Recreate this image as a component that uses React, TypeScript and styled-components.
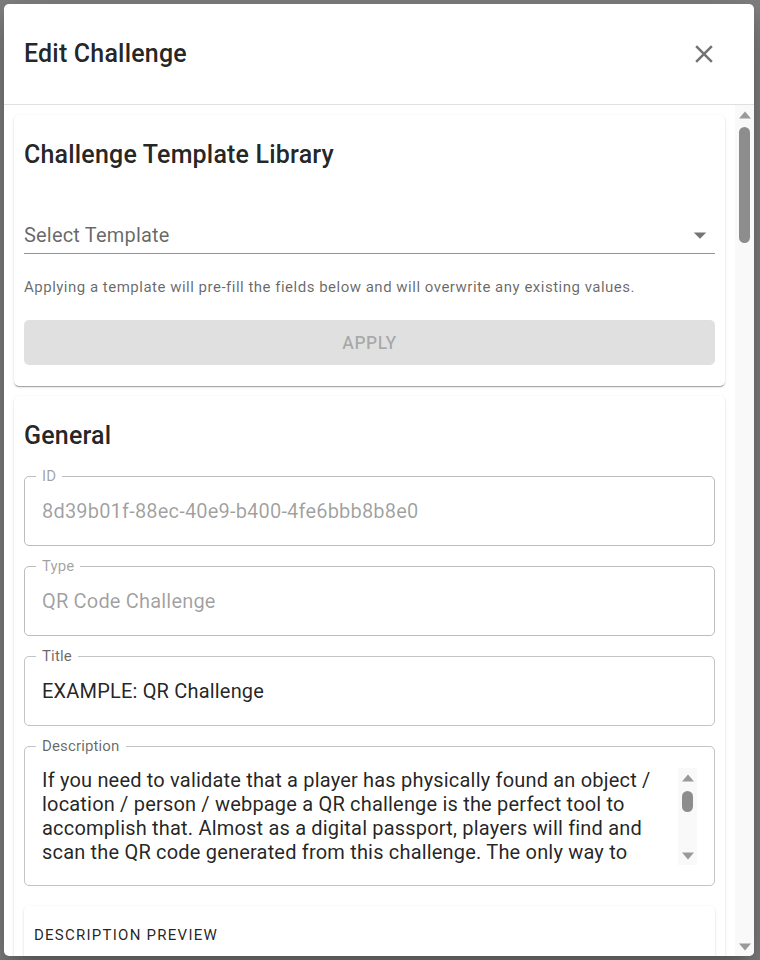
import * as React from 'react'
import styled, { createGlobalStyle } from 'styled-components'

type FieldInfo = {
  label: string
  value: string
  disabled?: boolean
}

const DESCRIPTION =
  'If you need to validate that a player has physically found an object / location / person / webpage a QR challenge is the perfect tool to accomplish that. Almost as a digital passport, players will find and scan the QR code generated from this challenge. The only way to complete this challenge is to scan the code with the camera of a mobile device, so make sure to print it out or put it somewhere your players can reach it. Once the code has been scanned the player is awarded the points for this challenge and will be shown the completion message. You can place several QR challenges around a venue to build a scavenger hunt.'

const GENERAL: FieldInfo[] = [
  { label: 'ID', value: '8d39b01f-88ec-40e9-b400-4fe6bbb8b8e0', disabled: true },
  { label: 'Type', value: 'QR Code Challenge', disabled: true },
  { label: 'Title', value: 'EXAMPLE: QR Challenge' },
]

const GlobalStyle = createGlobalStyle`
  html, body {
    margin: 0;
    padding: 0;
  }
  body {
    font-family: Roboto, "Noto Sans", "Liberation Sans", sans-serif;
    background: #808080;
    color: rgba(0, 0, 0, 0.87);
  }
  * {
    box-sizing: border-box;
  }
`

const Screen = styled.div`
  height: 960px;
  padding: 4px;
`

const Dialog = styled.div`
  width: 750px;
  height: 952px;
  display: flex;
  flex-direction: column;
  background: #fff;
  border-radius: 5px;
  overflow: hidden;
  box-shadow: 0px 11px 15px -7px rgba(0, 0, 0, 0.2),
    0px 24px 38px 3px rgba(0, 0, 0, 0.14), 0px 9px 46px 8px rgba(0, 0, 0, 0.12);
`

const Header = styled.div`
  flex-shrink: 0;
  height: 101px;
  display: flex;
  align-items: center;
  justify-content: space-between;
  padding: 0 35px 0 20px;
  border-bottom: 1px solid #e0e0e0;
`

const DialogTitle = styled.h2`
  margin: 0;
  font-size: 25px;
  font-weight: 500;
  line-height: 40px;
  letter-spacing: 0.0075em;
`

const CloseButton = styled.button`
  width: 30px;
  height: 30px;
  padding: 0;
  border: 0;
  background: transparent;
  color: rgba(0, 0, 0, 0.54);
  cursor: pointer;

  & > svg {
    display: block;
  }
`

const Body = styled.div`
  flex: 1;
  min-height: 0;
  display: flex;
`

const Content = styled.div`
  flex: 1;
  min-width: 0;
  overflow: hidden;
  padding: 10px;
  display: flex;
  flex-direction: column;
  gap: 10px;
`

/* scrollbar drawing: rail with arrow buttons and a thumb */
const Rail = styled.div`
  flex-shrink: 0;
  width: 19px;
  display: flex;
  flex-direction: column;
  background: #f9f9f9;
`

const RailButton = styled.div`
  flex-shrink: 0;
  height: 19px;
  display: flex;
  align-items: center;
  justify-content: center;
  color: #9a9a9a;

  & > svg {
    display: block;
  }
`

const RailTrack = styled.div`
  flex: 1;
  min-height: 0;
`

type ThumbProps = {
  $offset: number
  $size: number
}

const RailThumb = styled.div<ThumbProps>`
  width: 11px;
  height: ${p => p.$size}px;
  margin: ${p => p.$offset}px auto 0;
  border-radius: 6px;
  background: #8d8d8d;
`

const Card = styled.section`
  flex-shrink: 0;
  background: #fff;
  border-radius: 5px;
  padding: 20px 10px 21px;
  box-shadow: 0px 2px 1px -1px rgba(0, 0, 0, 0.2),
    0px 1px 1px 0px rgba(0, 0, 0, 0.14), 0px 1px 3px 0px rgba(0, 0, 0, 0.12);
`

const SectionTitle = styled.h3`
  margin: 0;
  font-size: 25px;
  font-weight: 500;
  line-height: 40px;
  letter-spacing: 0.0075em;
`

const SelectBox = styled.div`
  margin-top: 20px;
  padding: 25px 0 3px;
  display: flex;
  align-items: center;
  justify-content: space-between;
  border-bottom: 1px solid rgba(0, 0, 0, 0.42);
  font-size: 20px;
  line-height: 29px;
  letter-spacing: 0.00938em;
  color: rgba(0, 0, 0, 0.6);

  & > svg {
    display: block;
    color: rgba(0, 0, 0, 0.54);
  }
`

const HelperText = styled.p`
  margin: 21px 0 0;
  font-size: 15px;
  line-height: 25px;
  letter-spacing: 0.0333em;
  color: rgba(0, 0, 0, 0.6);
`

const ApplyButton = styled.button`
  display: block;
  width: 100%;
  height: 45px;
  margin-top: 20px;
  border: 0;
  border-radius: 5px;
  background: rgba(0, 0, 0, 0.12);
  color: rgba(0, 0, 0, 0.26);
  font-family: Roboto, sans-serif;
  font-size: 17.5px;
  font-weight: 500;
  letter-spacing: 0.02857em;
  text-transform: uppercase;
`

const Fields = styled.div`
  margin-top: 13px;
  display: flex;
  flex-direction: column;
  gap: 13px;
`

type MutedProps = {
  $muted?: boolean
}

const Outline = styled.fieldset<MutedProps>`
  margin: 0;
  min-width: 0;
  width: 100%;
  padding: 12px 17px 20px;
  border: 1px solid ${p => (p.$muted ? 'rgba(0, 0, 0, 0.26)' : 'rgba(0, 0, 0, 0.23)')};
  border-radius: 5px;
`

const TextOutline = styled(Outline)`
  padding-top: 14px;
`

const Legend = styled.legend<MutedProps>`
  margin-left: -6px;
  padding: 0 6px;
  font-size: 15px;
  line-height: 15px;
  letter-spacing: 0.00938em;
  color: ${p => (p.$muted ? 'rgba(0, 0, 0, 0.38)' : 'rgba(0, 0, 0, 0.6)')};
`

const Input = styled.input`
  display: block;
  width: 100%;
  height: 29px;
  padding: 0;
  border: 0;
  outline: none;
  background: transparent;
  font-family: Roboto, sans-serif;
  font-size: 20px;
  letter-spacing: 0.00938em;
  color: rgba(0, 0, 0, 0.87);

  &:disabled {
    color: rgba(0, 0, 0, 0.38);
    -webkit-text-fill-color: rgba(0, 0, 0, 0.38);
  }
`

const TextRow = styled.div`
  display: flex;
  height: 97px;
`

const TextArea = styled.textarea`
  flex: 1;
  min-width: 0;
  height: 100%;
  padding: 0;
  border: 0;
  outline: none;
  resize: none;
  overflow: hidden;
  background: transparent;
  font-family: Roboto, sans-serif;
  font-size: 20px;
  line-height: 24px;
  letter-spacing: 0.00938em;
  color: rgba(0, 0, 0, 0.87);
`

const PreviewCard = styled(Card)`
  margin-top: 20px;
  min-height: 160px;
  padding: 9px 10px 20px;
`

const Overline = styled.div`
  font-size: 15px;
  line-height: 40px;
  letter-spacing: 0.08333em;
  text-transform: uppercase;
`

function CloseIcon() {
  return (
    <svg width="30" height="30" viewBox="0 0 24 24" fill="currentColor">
      <path d="M19 6.41 17.59 5 12 10.59 6.41 5 5 6.41 10.59 12 5 17.59 6.41 19 12 13.41 17.59 19 19 17.59 13.41 12z" />
    </svg>
  )
}

function ArrowDropDown() {
  return (
    <svg width="30" height="30" viewBox="0 0 24 24" fill="currentColor">
      <path d="M7 10l5 5 5-5z" />
    </svg>
  )
}

function RailArrow({ down }: { down?: boolean }) {
  return (
    <RailButton>
      <svg width="12" height="8" viewBox="0 0 12 8" fill="currentColor">
        <path d={down ? 'M0 0.5H12L6 7.5z' : 'M6 0.5L12 7.5H0z'} />
      </svg>
    </RailButton>
  )
}

function ScrollRail({ offset, size }: { offset: number; size: number }) {
  return (
    <Rail>
      <RailArrow />
      <RailTrack>
        <RailThumb $offset={offset} $size={size} />
      </RailTrack>
      <RailArrow down />
    </Rail>
  )
}

function Field({ label, value, disabled }: FieldInfo) {
  return (
    <Outline $muted={disabled}>
      <Legend $muted={disabled}>{label}</Legend>
      <Input defaultValue={value} disabled={disabled} />
    </Outline>
  )
}

function App(): JSX.Element {
  return (
    <Screen>
      <GlobalStyle />
      <Dialog>
        <Header>
          <DialogTitle>Edit Challenge</DialogTitle>
          <CloseButton aria-label="close">
            <CloseIcon />
          </CloseButton>
        </Header>
        <Body>
          <Content>
            <Card>
              <SectionTitle>Challenge Template Library</SectionTitle>
              <SelectBox>
                <span>Select Template</span>
                <ArrowDropDown />
              </SelectBox>
              <HelperText>
                Applying a template will pre-fill the fields below and will
                overwrite any existing values.
              </HelperText>
              <ApplyButton disabled>Apply</ApplyButton>
            </Card>

            <Card>
              <SectionTitle>General</SectionTitle>
              <Fields>
                {GENERAL.map(field => (
                  <Field key={field.label} {...field} />
                ))}
                <TextOutline>
                  <Legend>Description</Legend>
                  <TextRow>
                    <TextArea defaultValue={DESCRIPTION} />
                    <ScrollRail offset={4} size={21} />
                  </TextRow>
                </TextOutline>
              </Fields>
              <PreviewCard>
                <Overline>Description Preview</Overline>
              </PreviewCard>
            </Card>
          </Content>
          <ScrollRail offset={3} size={116} />
        </Body>
      </Dialog>
    </Screen>
  )
}

export default App
